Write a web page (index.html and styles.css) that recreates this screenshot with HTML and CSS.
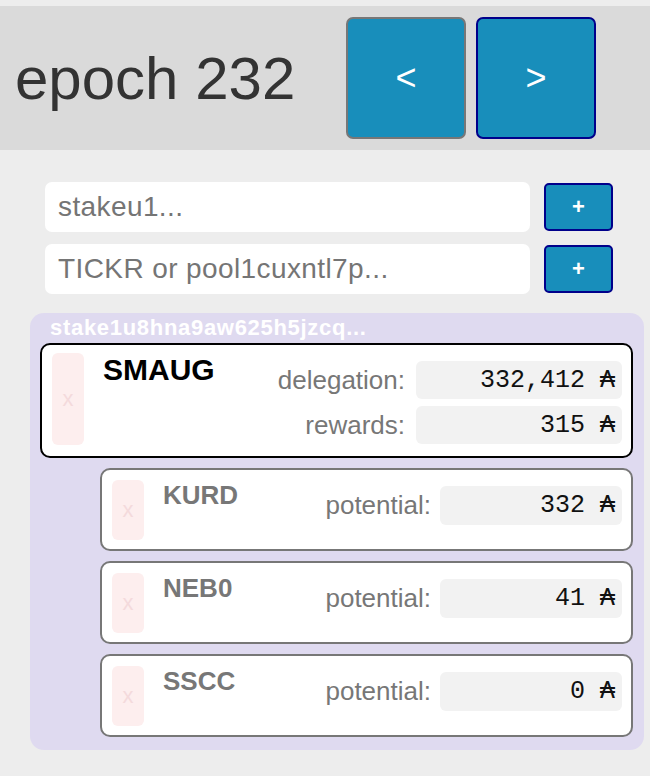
FILE: index.html
```html
<!DOCTYPE html>
<html>
<head>
<meta charset="utf-8">
<link rel="stylesheet" href="styles.css">
</head>
<body>
<header class="topbar">
  <h1 class="epoch">epoch 232</h1>
  <div class="nav">
    <button class="navbtn prev">&lt;</button>
    <button class="navbtn next">&gt;</button>
  </div>
</header>

<section class="adders">
  <div class="addrow">
    <input class="field" type="text" placeholder="stakeu1...">
    <button class="plus">+</button>
  </div>
  <div class="addrow">
    <input class="field" type="text" placeholder="TICKR or pool1cuxntl7p...">
    <button class="plus">+</button>
  </div>
</section>

<section class="account">
  <div class="account-title">stake1u8hna9aw625h5jzcq...</div>

  <div class="pool main">
    <button class="remove">x</button>
    <div class="pool-name">SMAUG</div>
    <div class="stats">
      <span class="label">delegation:</span><span class="value">332,412 ₳</span>
      <span class="label">rewards:</span><span class="value">315 ₳</span>
    </div>
  </div>

  <div class="pool alt">
    <button class="remove">x</button>
    <div class="pool-name">KURD</div>
    <div class="stats">
      <span class="label">potential:</span><span class="value">332 ₳</span>
    </div>
  </div>

  <div class="pool alt">
    <button class="remove">x</button>
    <div class="pool-name">NEB0</div>
    <div class="stats">
      <span class="label">potential:</span><span class="value">41 ₳</span>
    </div>
  </div>

  <div class="pool alt">
    <button class="remove">x</button>
    <div class="pool-name">SSCC</div>
    <div class="stats">
      <span class="label">potential:</span><span class="value">0 ₳</span>
    </div>
  </div>
</section>
</body>
</html>
```

FILE: styles.css
```css
* { box-sizing: border-box; }

body {
  margin: 0;
  padding-top: 6px;
  background: #ededed;
  font-family: "Liberation Sans", Arial, sans-serif;
}

.topbar {
  display: flex;
  align-items: center;
  height: 144px;
  padding: 0 0 0 15px;
  background: #dadada;
}

.epoch {
  margin: 0;
  width: 331px;
  font-size: 60px;
  font-weight: normal;
  color: #333;
  white-space: nowrap;
}

.nav {
  display: flex;
  gap: 10px;
}

.navbtn {
  width: 120px;
  height: 122px;
  border-radius: 7px;
  background: #188ebb;
  color: #fff;
  font-family: "Liberation Sans", Arial, sans-serif;
  font-size: 36px;
  border: 2px solid #00008b;
  padding: 0;
}

.navbtn.prev { border-color: #777; }

.adders {
  display: flex;
  flex-direction: column;
  gap: 12px;
  padding: 32px 0 0 45px;
}

.addrow {
  display: flex;
  align-items: center;
  gap: 14px;
}

.field {
  width: 485px;
  height: 50px;
  border: none;
  border-radius: 7px;
  background: #fff;
  padding: 0 13px;
  font-family: "Liberation Sans", Arial, sans-serif;
  font-size: 28px;
  letter-spacing: 0.4px;
  color: #333;
}

.field::placeholder { color: #757575; }

.plus {
  width: 69px;
  height: 48px;
  border: 2px solid #00008b;
  border-radius: 5px;
  background: #188ebb;
  color: #fff;
  font-family: "Liberation Sans", Arial, sans-serif;
  font-weight: bold;
  font-size: 22px;
  padding: 0;
}

.account {
  margin: 19px 6px 0 30px;
  padding: 2px 11px 13px 10px;
  background: #dfdaf0;
  border-radius: 14px;
  display: flex;
  flex-direction: column;
  gap: 10px;
}

.account-title {
  color: #fff;
  font-weight: bold;
  font-size: 22px;
  letter-spacing: 0.7px;
  line-height: 25px;
  margin-bottom: -7px;
  padding-left: 10px;
  white-space: nowrap;
}

.pool {
  display: flex;
  align-items: stretch;
  background: #fff;
  border-radius: 10px;
}

.pool.main {
  border: 2px solid #000;
  padding: 8px 9px 11px 10px;
}

.pool.alt {
  margin-left: 60px;
  border: 2px solid #777;
  padding: 10px 9px 9px 10px;
}

.remove {
  width: 32px;
  flex: none;
  border: none;
  border-radius: 6px;
  background: #fdeeee;
  color: #f4dadc;
  font-family: "Liberation Sans", Arial, sans-serif;
  font-size: 22px;
  padding: 0;
}

.pool.main .remove { height: 92px; }
.pool.alt .remove { height: 60px; }

.pool-name {
  flex: 1;
  margin-left: 19px;
  font-weight: bold;
  white-space: nowrap;
}

.pool.main .pool-name { font-size: 30px; color: #000; }
.pool.alt .pool-name { font-size: 26px; color: #777; }

.stats {
  display: grid;
  column-gap: 11px;
  row-gap: 7px;
  align-items: center;
  align-self: flex-start;
}

.pool.main .stats {
  grid-template-columns: auto 206px;
  margin-top: 8px;
}

.pool.alt .stats {
  grid-template-columns: auto 182px;
  column-gap: 9px;
  margin-top: 6px;
}

.label {
  text-align: right;
  color: #777;
  font-size: 26px;
}

.value {
  height: 38px;
  display: flex;
  align-items: center;
  justify-content: flex-end;
  padding-right: 7px;
  background: #f2f2f2;
  border-radius: 6px;
  font-family: "Liberation Mono", "DejaVu Sans Mono", monospace;
  font-size: 25px;
  color: #111;
}

.pool.alt .value { height: 39px; }
```
